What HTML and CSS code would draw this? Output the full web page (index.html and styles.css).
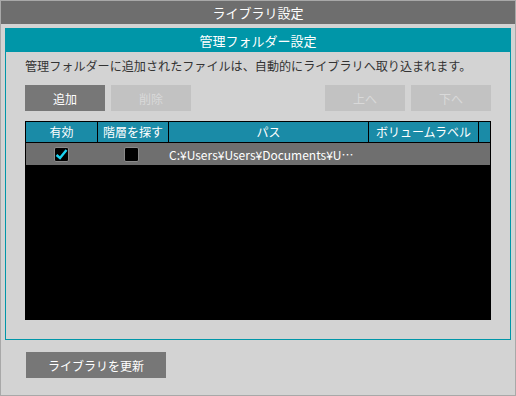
FILE: index.html
```html
<!DOCTYPE html>
<html lang="ja">
    <head>
        <meta charset="UTF-8">
        <title>ライブラリ設定</title>
        <link rel="stylesheet" href="styles.css">
    </head>
    <body>
        <div class="window">
            <div class="titlebar">ライブラリ設定</div>
            <div class="panel">
                <div class="panel-head">管理フォルダー設定</div>
                <div class="panel-body">
                    <p class="desc">管理フォルダーに追加されたファイルは、自動的にライブラリへ取り込まれます。</p>
                    <div class="toolbar">
                        <button class="btn">追加</button>
                        <button class="btn disabled">削除</button>
                        <span class="spacer"></span>
                        <button class="btn disabled">上へ</button>
                        <button class="btn disabled">下へ</button>
                    </div>
                    <div class="list">
                        <div class="list-row list-head">
                            <div class="cell">有効</div>
                            <div class="cell">階層を探す</div>
                            <div class="cell">パス</div>
                            <div class="cell">ボリュームラベル</div>
                            <div class="cell"></div>
                        </div>
                        <div class="list-row item">
                            <div class="cell"><span class="check on">
                                <svg viewBox="0 0 15 15" width="15" height="15"><path d="M2.5 8 L6 11 L12.5 3" fill="none" stroke="#1ad2f0" stroke-width="2.4"/></svg>
                            </span></div>
                            <div class="cell"><span class="check"></span></div>
                            <div class="cell path">C:¥Users¥Users¥Documents¥U…</div>
                            <div class="cell"></div>
                            <div class="cell"></div>
                        </div>
                    </div>
                </div>
            </div>
            <div class="footer">
                <button class="btn wide">ライブラリを更新</button>
            </div>
        </div>
    </body>
</html>
```

FILE: styles.css
```css
* {
    box-sizing: border-box;
}

body, html {
    margin: 0;
    height: 100%;
    font-family: "Noto Sans CJK JP", "Noto Sans", sans-serif;
    font-size: 12px;
}

.window {
    height: 396px;
    background-color: #d3d3d3;
    border: 1px solid #a8a8a8;
    display: flex;
    flex-direction: column;
}

.titlebar {
    height: 23px;
    line-height: 23px;
    background-color: #6e6e6e;
    color: #fff;
    text-align: center;
    font-size: 13px;
}

.panel {
    margin: 4px 4px 0 4px;
    height: 312px;
    border: 1px solid #0096a8;
    display: flex;
    flex-direction: column;
}

.panel-head {
    height: 23px;
    line-height: 23px;
    background-color: #0096a8;
    color: #fff;
    text-align: center;
    font-size: 13px;
}

.panel-body {
    padding: 0 19px 0 19px;
}

.desc {
    margin: 4px 0 0 0;
    height: 20px;
    line-height: 20px;
    color: #333;
    font-size: 12.1px;
}

.toolbar {
    display: flex;
    gap: 6px;
    margin-top: 9px;
}

.spacer {
    flex: 1;
}

.btn {
    width: 80px;
    height: 26px;
    border: none;
    padding: 0;
    background-color: #777;
    color: #fff;
    font-family: inherit;
    font-size: 12px;
}

.btn.disabled {
    background-color: #c2c2c2;
    color: #d9d9d9;
}

.list {
    margin-top: 10px;
    height: 199px;
    background-color: #000;
    border: 1px solid #000;
}

.list-row {
    display: grid;
    grid-template-columns: 71px 70px 199px 109px 1fr;
    column-gap: 1px;
}

.list-head {
    height: 20px;
    color: #fff;
}

.list-head .cell {
    background-color: #1a8ba7;
    text-align: center;
    line-height: 20px;
}

.item {
    height: 22px;
    margin-top: 1px;
    column-gap: 0;
    background-color: #6f6f6f;
    color: #fff;
}

.item .cell {
    display: flex;
    align-items: center;
    justify-content: center;
    margin-right: 1px;
}

.item .cell.path {
    justify-content: flex-start;
    padding-left: 2px;
}

.check {
    width: 15px;
    height: 15px;
    background-color: #000;
    border: 1px solid #8a8a8a;
    border-radius: 2px;
    display: flex;
}

.check svg {
    margin: -1px;
}

.footer {
    padding: 12px 0 0 25px;
}

.btn.wide {
    width: 140px;
}
```
